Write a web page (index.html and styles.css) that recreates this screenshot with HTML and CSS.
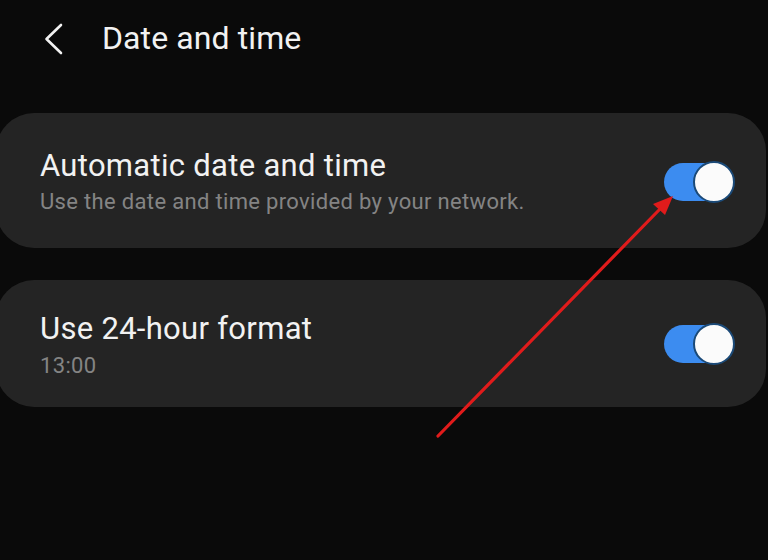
FILE: index.html
```html
<!DOCTYPE html>
<html>
<head>
<meta charset="utf-8">
<link rel="stylesheet" href="styles.css">
</head>
<body>
<div class="screen">
  <header class="appbar">
    <svg class="back" width="22" height="32" viewBox="0 0 22 32"><path d="M19 2 L4.5 16 L19 30" fill="none" stroke="#f2f2f2" stroke-width="2.6" stroke-linecap="round" stroke-linejoin="round"/></svg>
    <h1 class="title">Date and time</h1>
  </header>
  <section class="card card-auto">
    <div class="text">
      <div class="label">Automatic date and time</div>
      <div class="sub">Use the date and time provided by your network.</div>
    </div>
    <div class="switch"><div class="knob"></div></div>
  </section>
  <section class="card card-24">
    <div class="text">
      <div class="label">Use 24-hour format</div>
      <div class="sub">13:00</div>
    </div>
    <div class="switch"><div class="knob"></div></div>
  </section>
  <svg class="arrow" width="768" height="560" viewBox="0 0 768 560">
    <line x1="438" y1="436" x2="660" y2="209" stroke="#e01b1b" stroke-width="3.2" stroke-linecap="round"/>
    <polygon points="673,196 653,204 665,215" fill="#e01b1b"/>
  </svg>
</div>
</body>
</html>
```
FILE: styles.css
```css
html, body {
  margin: 0;
  padding: 0;
  background: #0a0a0a;
}
.screen {
  position: relative;
  width: 768px;
  height: 560px;
  overflow: hidden;
  font-family: Roboto, "Noto Sans", sans-serif;
  color: #f2f2f2;
}
.appbar {
  display: flex;
  align-items: center;
  height: 76px;
  padding-left: 42px;
}
.back {
  display: block;
  margin-right: 38px;
  margin-top: 1px;
}
.title {
  margin: 0;
  font-size: 32px;
  line-height: 38px;
  font-weight: 400;
  letter-spacing: 0.1px;
  color: #f2f2f2;
}
.card {
  display: flex;
  align-items: flex-start;
  justify-content: space-between;
  background: #242424;
  margin-left: -4px;
  width: 770px;
  border-radius: 38px;
  box-sizing: border-box;
  padding: 0 34px 0 44px;
}
.card-auto {
  margin-top: 37px;
  height: 135px;
  padding-top: 35px;
}
.card-24 {
  margin-top: 32px;
  height: 127px;
  padding-top: 31px;
}
.text {
  display: flex;
  flex-direction: column;
}
.label {
  font-size: 31px;
  line-height: 36px;
  letter-spacing: 0.3px;
  color: #f2f2f2;
}
.sub {
  font-size: 22px;
  line-height: 26px;
  margin-top: 5px;
  letter-spacing: 0.33px;
  color: #848484;
}
.card-24 .sub { margin-top: 6px; }
.switch {
  position: relative;
  align-self: center;
  width: 68px;
  height: 38px;
  border-radius: 19px;
  background: #3c8cf0;
}
.card-auto .switch { margin-top: -32px; }
.card-24 .switch { margin-top: -31px; }
.knob {
  position: absolute;
  right: -3px;
  top: -2px;
  width: 38px;
  height: 38px;
  border-radius: 50%;
  background: #fbfbfb;
  border: 2px solid #1b4a78;
}
.arrow {
  position: absolute;
  left: 0;
  top: 0;
}
```
